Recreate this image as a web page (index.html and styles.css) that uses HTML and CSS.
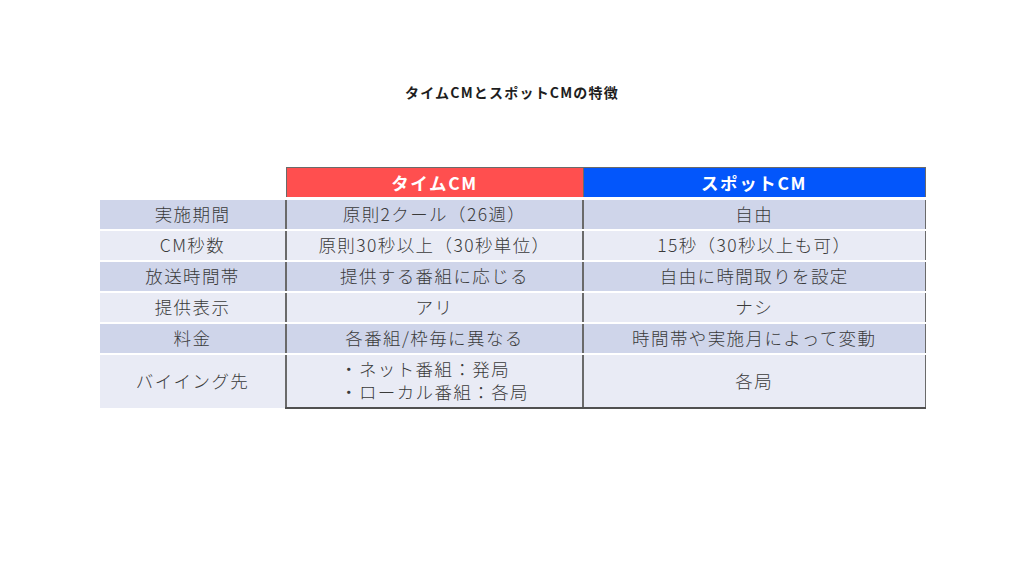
FILE: index.html
```html
<!DOCTYPE html>
<html lang="ja">
<head>
<meta charset="utf-8">
<link rel="stylesheet" href="styles.css">
</head>
<body>
<div class="page">
  <h1 class="title">タイムCMとスポットCMの特徴</h1>
  <table class="cmp">
    <colgroup>
      <col class="c1"><col class="c2"><col class="c3">
    </colgroup>
    <thead>
      <tr class="head">
        <th class="blank"></th>
        <th class="time">タイムCM</th>
        <th class="spot">スポットCM</th>
      </tr>
    </thead>
    <tbody>
      <tr class="dark"><td class="lbl">実施期間</td><td>原則2クール（26週）</td><td>自由</td></tr>
      <tr class="light"><td class="lbl">CM秒数</td><td>原則30秒以上（30秒単位）</td><td>15秒（30秒以上も可）</td></tr>
      <tr class="dark"><td class="lbl">放送時間帯</td><td>提供する番組に応じる</td><td>自由に時間取りを設定</td></tr>
      <tr class="light"><td class="lbl">提供表示</td><td>アリ</td><td>ナシ</td></tr>
      <tr class="dark"><td class="lbl">料金</td><td>各番組/枠毎に異なる</td><td>時間帯や実施月によって変動</td></tr>
      <tr class="light tall"><td class="lbl">バイイング先</td><td><span class="list">・ネット番組：発局<br>・ローカル番組：各局</span></td><td>各局</td></tr>
    </tbody>
  </table>
</div>
</body>
</html>
```
FILE: styles.css
```css
html, body {
  margin: 0;
  padding: 0;
  background: #ffffff;
}
.page {
  width: 1024px;
  height: 576px;
  padding-top: 82px;
  box-sizing: border-box;
  font-family: "Noto Sans CJK JP", "Noto Sans", sans-serif;
}
.title {
  margin: 0;
  text-align: center;
  font-size: 14px;
  line-height: 20px;
  font-weight: 700;
  color: #1e1e1e;
  letter-spacing: 1.2px;
}
.cmp {
  margin-top: 65px;
  margin-left: 100px;
  border-collapse: collapse;
  table-layout: fixed;
  width: 825px;
}
.c1 { width: 186px; }
.c2 { width: 297px; }
.c3 { width: 342px; }
.cmp th, .cmp td {
  padding: 0;
  text-align: center;
  vertical-align: middle;
}
.head th {
  height: 29px;
  font-size: 17.5px;
  line-height: 24px;
  font-weight: 700;
  color: #ffffff;
  letter-spacing: 1.6px;
  border: 1px solid #6a6a6a;
  border-bottom: 3px solid #ffffff;
}
.head .blank {
  background: #ffffff;
  border: none;
  border-bottom: 3px solid #ffffff;
}
.head .time { background: #ff4f4f; }
.head .spot { background: #0356fb; }
.cmp td {
  height: 27px;
  padding-bottom: 2px;
  font-size: 17.5px;
  line-height: 23px;
  font-weight: 300;
  color: #3a3a3a;
  letter-spacing: 1.4px;
  border-left: 2px solid #6a6a6a;
  border-right: 1px solid #6a6a6a;
  border-bottom: 2px solid #ffffff;
}
.cmp td.lbl {
  border-left: none;
}
.dark td { background: #cfd5ea; }
.light td { background: #e9ebf5; }
.tall td {
  height: 50px;
  border-bottom: 2px solid #505050;
}
.tall td.lbl {
  border-bottom: none;
}
.list {
  display: inline-block;
  text-align: left;
  line-height: 23px;
}
```
